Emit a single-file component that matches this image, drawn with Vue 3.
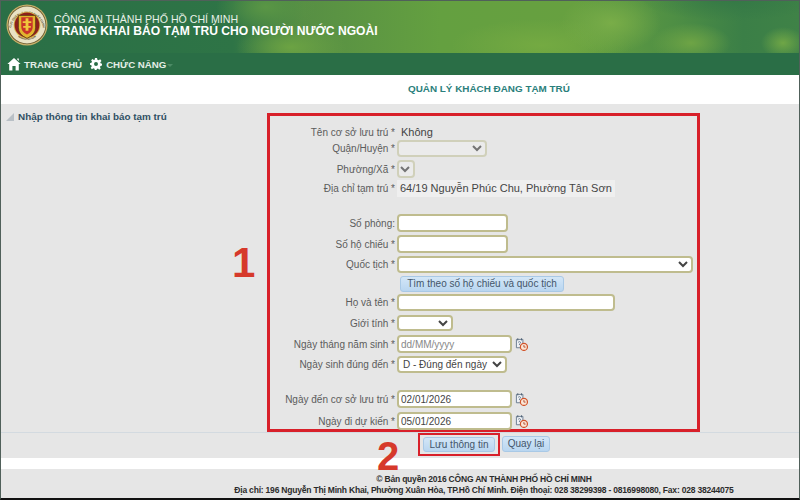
<template>
  <div class="page">
    <header class="banner">
      <svg class="logo" viewBox="0 0 44 44" width="42" height="42">
        <defs>
          <path id="ringTop" d="M5.5 24 A16.7 16.7 0 0 1 38.5 24" />
          <path id="ringBottom" d="M7 26 A15.5 15.5 0 0 0 37 26" />
        </defs>
        <circle cx="22" cy="22" r="21.5" fill="#c8b06a" />
        <circle cx="22" cy="22" r="20.2" fill="#6b5a2e" />
        <circle cx="22" cy="22" r="19.4" fill="#e9e2c4" />
        <text class="ring-text"><textPath href="#ringTop" startOffset="50%" text-anchor="middle">CỤC QUẢN LÝ XUẤT NHẬP CẢNH</textPath></text>
        <text class="ring-text"><textPath href="#ringBottom" startOffset="50%" text-anchor="middle">IMMIGRATION</textPath></text>
        <circle cx="22" cy="22" r="14" fill="#d9b648" />
        <circle cx="22" cy="22" r="13" fill="#8e1f1c" />
        <path d="M13 12 H31 V25 Q31 32 22 36 Q13 32 13 25 Z" fill="#e2b52e" stroke="#5b3b12" stroke-width=".8" />
        <path d="M16 14 H28 V24 Q28 29 22 32 Q16 29 16 24 Z" fill="#c9332a" />
        <path d="M20.5 15 H23.5 V28 H20.5 Z M17.5 18 H26.5 V20 H17.5 Z M18 23 H26 V25 H18 Z" fill="#f0c63c" />
      </svg>
      <div class="brand">
        <div class="brand-org">CÔNG AN THÀNH PHỐ HỒ CHÍ MINH</div>
        <div class="brand-title">TRANG KHAI BÁO TẠM TRÚ CHO NGƯỜI NƯỚC NGOÀI</div>
      </div>
    </header>

    <nav class="menu">
      <a class="menu-item">
        <svg viewBox="0 0 14 14" width="14" height="14">
          <path d="M7 1 L13.6 7 H11.8 V13.4 H8.6 V9 H5.4 V13.4 H2.2 V7 H.4 Z" fill="#fff" />
          <path d="M10.2 1.6 H11.8 V4 L10.2 2.6 Z" fill="#fff" />
        </svg>
        TRANG CHỦ
      </a>
      <a class="menu-item">
        <svg viewBox="0 0 14 14" width="12" height="12">
          <path d="M5.8 0 H8.2 L8.6 2 L10.1 2.7 L11.9 1.6 L13.4 3.4 L12 4.9 L12.4 6.2 L14 6.8 V8.8 L12.3 9.2 L11.6 10.6 L12.5 12.3 L10.7 13.6 L9.3 12.3 L8 12.7 L7.6 14 H5.6 L5.3 12.6 L3.9 12 L2.2 13 L.8 11.4 L2 9.8 L1.6 8.6 L0 8 V6 L1.7 5.6 L2.3 4.2 L1.3 2.6 L3 1.2 L4.5 2.4 L5.5 2 Z M7 4.8 A2.3 2.3 0 1 0 7 9.4 A2.3 2.3 0 1 0 7 4.8 Z" fill="#fff" fill-rule="evenodd" />
        </svg>
        CHỨC NĂNG<i class="caret"></i>
      </a>
    </nav>

    <h1 class="page-title">QUẢN LÝ KHÁCH ĐANG TẠM TRÚ</h1>

    <main class="panel">
      <div class="panel-body">
        <aside class="side">
          <div class="side-title"><i class="side-arrow"></i>Nhập thông tin khai báo tạm trú</div>
          <span class="mark-one">1</span>
        </aside>

        <form class="form-box" @submit.prevent>
          <div class="row row-text">
            <label>Tên cơ sở lưu trú *</label>
            <span class="value">Không</span>
          </div>
          <div class="row flush">
            <label>Quận/Huyện *</label>
            <select class="f-district" disabled><option></option></select>
          </div>
          <div class="row">
            <label>Phường/Xã *</label>
            <select class="f-ward" disabled><option></option></select>
          </div>
          <div class="row tight">
            <label>Địa chỉ tạm trú *</label>
            <span class="address">64/19 Nguyễn Phúc Chu, Phường Tân Sơn</span>
          </div>
          <div class="row section">
            <label>Số phòng:</label>
            <input class="f-short" type="text" />
          </div>
          <div class="row">
            <label>Số hộ chiếu *</label>
            <input class="f-short" type="text" />
          </div>
          <div class="row">
            <label>Quốc tịch *</label>
            <select class="f-full"><option></option></select>
          </div>
          <div class="row">
            <label></label>
            <button class="btn btn-find" type="button">Tìm theo số hộ chiếu và quốc tịch</button>
          </div>
          <div class="row tight">
            <label>Họ và tên *</label>
            <input class="f-name" type="text" />
          </div>
          <div class="row wide">
            <label>Giới tính *</label>
            <select class="f-gender"><option></option></select>
          </div>
          <div class="row wide">
            <label>Ngày tháng năm sinh *</label>
            <input class="f-date" type="text" placeholder="dd/MM/yyyy" />
            <svg class="cal" viewBox="0 0 14 14" width="13" height="13"><use href="#calIcon" /></svg>
          </div>
          <div class="row">
            <label>Ngày sinh đúng đến *</label>
            <select class="f-exact"><option>D - Đúng đến ngày</option></select>
          </div>
          <div class="row section">
            <label>Ngày đến cơ sở lưu trú *</label>
            <input class="f-date" type="text" value="02/01/2026" />
            <svg class="cal" viewBox="0 0 14 14" width="13" height="13"><use href="#calIcon" /></svg>
          </div>
          <div class="row wide">
            <label>Ngày đi dự kiến *</label>
            <input class="f-date" type="text" value="05/01/2026" />
            <svg class="cal" viewBox="0 0 14 14" width="13" height="13"><use href="#calIcon" /></svg>
          </div>
        </form>
      </div>

      <div class="actions">
        <span class="mark-two">2</span>
        <span class="save-mark">
          <button class="btn btn-save" type="button">Lưu thông tin</button>
        </span>
        <button class="btn btn-back" type="button">Quay lại</button>
      </div>
    </main>

    <footer class="foot">
      <div>© Bản quyền 2016 CÔNG AN THÀNH PHỐ HỒ CHÍ MINH</div>
      <div>Địa chỉ: 196 Nguyễn Thị Minh Khai, Phường Xuân Hòa, TP.Hồ Chí Minh. Điện thoại: 028 38299398 - 0816998080, Fax: 028 38244075</div>
    </footer>

    <svg class="defs" width="0" height="0">
      <symbol id="calIcon" viewBox="0 0 14 14">
        <path d="M1.5 1.5 H8.5 V8 H7 V10.5 H1.5 Z" fill="#eef1f5" stroke="#66788c" stroke-width="1" />
        <path d="M3 .3 V2.6 M7 .3 V2.6" stroke="#4d5f73" stroke-width="1" />
        <path d="M3.4 4.6 Q5 3.2 6 4.6 Q6 5.8 4.8 6.4 V7.6" fill="none" stroke="#66788c" stroke-width="1" />
        <circle cx="9.6" cy="9.6" r="3.8" fill="#fbe6d6" stroke="#d2552c" stroke-width="1.3" />
        <path d="M9.6 7.6 V9.8 H11.4" fill="none" stroke="#a83c1e" stroke-width=".9" />
      </symbol>
    </svg>
  </div>
</template>

<script setup>
</script>

<style>
html,
body {
  margin: 0;
  background: #fff;
}
</style>

<style scoped>
.page {
  width: 800px;
  height: 500px;
  box-sizing: border-box;
  border: 1px solid #50605a;
  border-bottom: 2px solid #111;
  display: flex;
  flex-direction: column;
  overflow: hidden;
  background: #fff;
  font-family: "Liberation Sans", Arial, sans-serif;
  color: #555;
}

.banner {
  height: 52px;
  flex: none;
  display: flex;
  align-items: flex-start;
  padding: 3px 0 0 5px;
  box-sizing: border-box;
  gap: 6px;
  background:
    radial-gradient(ellipse 90px 22px at 730px -2px, rgba(52, 120, 70, 0.95) 0%, rgba(52, 120, 70, 0) 100%),
    radial-gradient(ellipse 22px 16px at 782px 42px, #6fa646 0%, rgba(111, 166, 70, 0) 100%),
    radial-gradient(ellipse 40px 20px at 690px 42px, #6ea445 0%, rgba(110, 164, 69, 0) 100%),
    radial-gradient(ellipse 50px 30px at 610px 22px, #79ad48 0%, rgba(121, 173, 72, 0) 100%),
    radial-gradient(ellipse 90px 26px at 540px 44px, #74aa42 0%, rgba(116, 170, 66, 0) 100%),
    radial-gradient(ellipse 55px 24px at 290px 46px, #6ca343 0%, rgba(108, 163, 67, 0) 100%),
    radial-gradient(ellipse 50px 28px at 265px 6px, #5a9645 0%, rgba(90, 150, 69, 0) 100%),
    linear-gradient(90deg, #2a6f46 0%, #2e7446 29%, #578f44 38%, #64a040 55%, #67a040 72%, #4f8f44 84%, #3b7f47 93%, #3f8247 100%);
}

.logo {
  flex: none;
}

.ring-text {
  font-size: 3px;
  font-weight: 700;
  fill: #4b3b16;
}

.brand {
  padding-top: 9px;
  color: #fff;
}

.brand-org {
  font-size: 10.6px;
  line-height: 12px;
  color: #e8f1e6;
}

.brand-title {
  font-size: 12.1px;
  line-height: 13px;
  font-weight: 700;
  white-space: nowrap;
}

.menu {
  height: 22px;
  flex: none;
  display: flex;
  align-items: center;
  gap: 8px;
  padding-left: 6px;
  background: #2a6e46;
}

.menu-item {
  display: flex;
  align-items: center;
  gap: 3px;
  font-size: 9.7px;
  font-weight: 700;
  color: #e4eee7;
}

.menu-item + .menu-item {
  gap: 4px;
}

.caret {
  width: 0;
  height: 0;
  margin: 2px 0 0 -3px;
  border: 3px solid transparent;
  border-top-color: #4d8b66;
  border-bottom: 0;
}

.page-title {
  height: 29px;
  flex: none;
  margin: 0;
  padding: 7px 0 0 407px;
  box-sizing: border-box;
  font-size: 9.9px;
  line-height: 13px;
  font-weight: 700;
  color: #2b7f7c;
}

.panel {
  height: 354px;
  flex: none;
  background: #e6e6e6;
  display: flex;
  flex-direction: column;
}

.panel-body {
  display: flex;
  padding-top: 9px;
  height: 329px;
  box-sizing: border-box;
  border-bottom: 1px solid #d3dae0;
}

.side {
  width: 266px;
  flex: none;
  position: relative;
}

.side-title {
  display: flex;
  align-items: center;
  gap: 4px;
  margin-top: -3px;
  padding-left: 5px;
  font-size: 9.9px;
  line-height: 13px;
  font-weight: 700;
  color: #2f4f63;
}

.side-arrow {
  width: 0;
  height: 0;
  border-style: solid;
  border-width: 0 0 8px 8px;
  border-color: transparent transparent #b9c0c6 transparent;
}

.mark-one {
  position: absolute;
  left: 231px;
  top: 125px;
  font-size: 42px;
  line-height: 50px;
  font-weight: 700;
  color: #d6392b;
}

.form-box {
  width: 433px;
  height: 319px;
  box-sizing: border-box;
  border: 3px solid #d8202a;
  padding-top: 8px;
}

.row {
  display: flex;
  align-items: center;
  margin-top: 3px;
}

.row-text {
  margin-top: 0;
  height: 16px;
}

.row.flush {
  margin-top: 0;
}

.row.tight {
  margin-top: 2px;
}

.row.wide {
  margin-top: 4px;
}

.row.section {
  margin-top: 17px;
}

.row label {
  width: 125px;
  flex: none;
  margin-right: 2px;
  text-align: right;
  font-size: 10px;
  white-space: nowrap;
  color: #5c5c5c;
}

.value {
  margin-left: 4px;
  font-size: 11px;
  color: #444;
}

.address {
  width: 218px;
  height: 17px;
  box-sizing: border-box;
  padding-left: 3px;
  background: #efefef;
  font-size: 11px;
  line-height: 17px;
  color: #444;
  white-space: nowrap;
}

input,
select {
  box-sizing: border-box;
  height: 18px;
  padding: 0 2px;
  margin: 0;
  border: 2px solid #bfbc8e;
  border-radius: 4px;
  background: #fff;
  font-family: "Liberation Sans", Arial, sans-serif;
  font-size: 10px;
  color: #444;
  outline: none;
}

select {
  padding: 0;
}

select:disabled {
  background: #eeeeee;
  border-color: #c8c8a8;
}

input::placeholder {
  color: #888;
  opacity: 1;
}

.f-district {
  width: 90px;
  height: 17px;
}

.f-ward {
  width: 18px;
}

.f-short {
  width: 111px;
}

.f-full {
  width: 296px;
  height: 17px;
}

.f-name {
  width: 218px;
  height: 17px;
}

.f-gender {
  width: 56px;
  height: 16px;
}

.f-date {
  width: 115px;
}

.f-exact {
  width: 110px;
  height: 17px;
}

.cal {
  margin-left: 3px;
}

.btn {
  height: 16px;
  padding: 0;
  border: 1px solid #a9c9e6;
  border-radius: 3px;
  background: linear-gradient(#d3e6f7, #b9d6f0);
  font-family: "Liberation Sans", Arial, sans-serif;
  font-size: 10px;
  line-height: 14px;
  color: #44566a;
}

.btn-find {
  width: 164px;
  margin-left: 3px;
}

.actions {
  height: 25px;
  position: relative;
  display: flex;
  align-items: flex-start;
  gap: 2px;
  padding-left: 417px;
  box-sizing: border-box;
}

.save-mark {
  display: flex;
  padding: 2px 3px;
  border: 2px solid #d8202a;
}

.btn-save {
  width: 72px;
  height: 15px;
}

.btn-back {
  width: 48px;
  margin-top: 3px;
}

.mark-two {
  position: absolute;
  left: 376px;
  top: 0;
  font-size: 40px;
  line-height: 46px;
  font-weight: 700;
  color: #d6392b;
}

.foot {
  margin-top: 11px;
  height: 29px;
  flex: none;
  padding: 5px 0 0 168px;
  box-sizing: border-box;
  background: #e6e6e6;
  text-align: center;
  font-size: 8.5px;
  line-height: 11px;
  letter-spacing: -0.2px;
  font-weight: 700;
  color: #2c2c2c;
  white-space: nowrap;
}

.defs {
  position: absolute;
}
</style>
